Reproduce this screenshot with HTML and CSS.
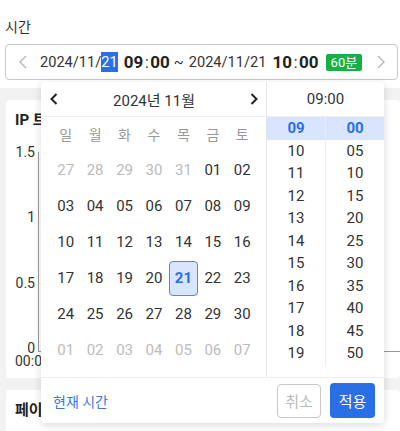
FILE: index.html
```html
<!DOCTYPE html>
<html lang="ko">
<head>
<meta charset="utf-8">
<link rel="stylesheet" href="styles.css">
</head>
<body>
<div class="top">
  <div class="label">시간</div>
  <div class="field">
    <svg class="f-chev" width="8" height="14" viewBox="0 0 8 14"><path d="M7 1 L1 7 L7 13" fill="none" stroke="#b5b5b5" stroke-width="1.3"/></svg>
    <div class="range">
      <span class="date">2024/11/<span class="sel">21</span></span>
      <span class="tm">09<span class="colon">:</span>00</span>
      <span class="tilde">~</span>
      <span class="date">2024/11/21</span>
      <span class="tm">10<span class="colon">:</span>00</span>
      <span class="badge">60분</span>
    </div>
    <svg class="f-chev r" width="8" height="14" viewBox="0 0 8 14"><path d="M1 1 L7 7 L1 13" fill="none" stroke="#b5b5b5" stroke-width="1.3"/></svg>
  </div>
</div>
<div class="bg">
  <div class="card c1">
    <div class="ctitle">IP 트래픽</div>
    <div class="chart">
      <div class="yaxis"><span>1.5</span><span>1</span><span>0.5</span><span>0</span></div>
      <div class="plot"></div>
    </div>
    <div class="xaxis">00:00</div>
  </div>
  <div class="card c2">
    <div class="ctitle">페이지</div>
  </div>
</div>

<div class="popup">
  <div class="main">
    <div class="cal">
      <div class="cal-head">
        <svg width="10" height="14" viewBox="0 0 10 14"><path d="M7.5 2 L2.5 7 L7.5 12" fill="none" stroke="#222" stroke-width="2"/></svg>
        <span class="ym">2024년 11월</span>
        <svg width="10" height="14" viewBox="0 0 10 14"><path d="M2.5 2 L7.5 7 L2.5 12" fill="none" stroke="#222" stroke-width="2"/></svg>
      </div>
      <div class="grid">
        <div class="wd">일</div><div class="wd">월</div><div class="wd">화</div><div class="wd">수</div><div class="wd">목</div><div class="wd">금</div><div class="wd">토</div>
        <div class="d off">27</div><div class="d off">28</div><div class="d off">29</div><div class="d off">30</div><div class="d off">31</div><div class="d">01</div><div class="d">02</div>
        <div class="d">03</div><div class="d">04</div><div class="d">05</div><div class="d">06</div><div class="d">07</div><div class="d">08</div><div class="d">09</div>
        <div class="d">10</div><div class="d">11</div><div class="d">12</div><div class="d">13</div><div class="d">14</div><div class="d">15</div><div class="d">16</div>
        <div class="d">17</div><div class="d">18</div><div class="d">19</div><div class="d">20</div><div class="d"><span class="cur">21</span></div><div class="d">22</div><div class="d">23</div>
        <div class="d">24</div><div class="d">25</div><div class="d">26</div><div class="d">27</div><div class="d">28</div><div class="d">29</div><div class="d">30</div>
        <div class="d off">01</div><div class="d off">02</div><div class="d off">03</div><div class="d off">04</div><div class="d off">05</div><div class="d off">06</div><div class="d off">07</div>
      </div>
    </div>
    <div class="time">
      <div class="t-head">09:00</div>
      <div class="cols">
        <div class="col hours">
          <div class="t on">09</div><div class="t">10</div><div class="t">11</div><div class="t">12</div><div class="t">13</div><div class="t">14</div><div class="t">15</div><div class="t">16</div><div class="t">17</div><div class="t">18</div><div class="t">19</div>
        </div>
        <div class="col mins">
          <div class="t on">00</div><div class="t">05</div><div class="t">10</div><div class="t">15</div><div class="t">20</div><div class="t">25</div><div class="t">30</div><div class="t">35</div><div class="t">40</div><div class="t">45</div><div class="t">50</div>
        </div>
      </div>
    </div>
  </div>
  <div class="footer">
    <span class="now">현재 시간</span>
    <div class="btns">
      <button class="btn cancel">취소</button>
      <button class="btn apply">적용</button>
    </div>
  </div>
</div>
</body>
</html>
```

FILE: styles.css
```css
* { box-sizing: border-box; }
html, body { margin: 0; padding: 0; }
body {
  width: 400px;
  height: 431px;
  overflow: hidden;
  position: relative;
  font-family: Roboto, "Noto Sans CJK KR", sans-serif;
  color: #333;
  background: #fff;
}
.top { padding: 17px 2px 8px 5px; }
.label { font-size: 14px; line-height: 20px; color: #333; }
.field {
  margin-top: 7px;
  height: 36px;
  border: 1px solid #c8c8c8;
  border-radius: 4px;
  display: flex;
  align-items: center;
  padding: 0 12px 0 12px;
}
.f-chev { flex: none; margin-left: 1px; }
.f-chev.r { margin-left: auto; }
.range {
  display: flex;
  align-items: center;
  gap: 6px;
  margin-left: 13px;
  font-size: 14.6px;
  color: #333;
  white-space: nowrap;
}
.sel { background: #2a6fe6; color: #fff; padding: 1px 0; }
.tm { font-size: 17px; font-weight: 700; color: #222; letter-spacing: 0; }
.colon { font-weight: 400; margin: 0 1.5px; color: #444; }
.tilde { margin: 0 -1px 0 -2px; }
.badge {
  background: #17b045;
  color: #fff;
  font-size: 13px;
  line-height: 17px;
  padding: 0 5px;
  border-radius: 2px;
  margin-left: 1px;
}
.bg {
  background: #f2f2f2;
  height: 343px;
  padding: 12px 0 0 6px;
}
.card { background: #fff; border-radius: 4px; }
.c1 { height: 278px; padding: 10px 0 0 9px; margin-bottom: 12px; }
.c2 { height: 60px; padding: 10px 0 0 9px; }
.ctitle { font-size: 15px; font-weight: 700; line-height: 20px; color: #222; white-space: nowrap; }
.chart { display: flex; margin-top: 14px; height: 212px; }
.yaxis {
  width: 20px;
  display: flex;
  flex-direction: column;
  justify-content: space-between;
  align-items: flex-end;
  font-size: 14px;
  line-height: 16px;
  color: #333;
}
.plot {
  flex: 1;
  margin: 8px 0 0 3px;
  height: 200px;
  border-left: 1.5px solid #9a9a9a;
  border-bottom: 1.5px solid #9a9a9a;
}
.xaxis { font-size: 14px; line-height: 12px; margin-top: -1px; color: #333; }

.popup {
  position: absolute;
  left: 41px;
  top: 82px;
  width: 343px;
  height: 341px;
  background: #fff;
  border-radius: 4px;
  box-shadow: 0 2px 8px rgba(0,0,0,0.15);
  display: flex;
  flex-direction: column;
}
.main { display: flex; height: 295px; }
.cal { width: 226px; border-right: 1px solid #e8e8e8; }
.cal-head {
  height: 35px;
  border-bottom: 1px solid #eee;
  display: flex;
  align-items: center;
  justify-content: space-between;
  padding: 0 7px 0 8px;
}
.ym { font-size: 15px; color: #333; }
.grid {
  display: grid;
  grid-template-columns: repeat(7, 1fr);
  grid-auto-rows: 36px;
  padding: 0 9px 0 10px;
}
.wd { height: 34px; display: flex; align-items: center; justify-content: center; font-size: 14px; color: #999; }
.grid > .wd { align-self: start; }
.d { display: flex; align-items: center; justify-content: center; font-size: 15px; color: #333; margin-top: -2px; }
.d.off { color: #bbb; }
.cur {
  width: 29px;
  height: 35px;
  display: flex;
  align-items: center;
  justify-content: center;
  background: #d8e5fd;
  border: 1px solid #4d88ef;
  border-radius: 4px;
  color: #2a6fe6;
  font-weight: 700;
}
.time { flex: 1; display: flex; flex-direction: column; }
.t-head {
  height: 35px;
  border-bottom: 1px solid #eee;
  display: flex;
  align-items: center;
  justify-content: center;
  font-size: 15px;
  color: #333;
}
.cols { display: flex; height: 249px; }
.hours { width: 59px; border-right: 1px solid #eee; }
.mins { flex: 1; }
.t {
  height: 22.5px;
  display: flex;
  align-items: center;
  justify-content: center;
  font-size: 15px;
  color: #333;
}
.t.on { background: #d8e5fd; color: #2a6fe6; font-weight: 700; }
.footer {
  flex: 1;
  border-top: 1px solid #eee;
  display: flex;
  align-items: center;
  justify-content: space-between;
  padding: 0 9px 0 12px;
}
.now { font-size: 14px; color: #3a78e0; }
.btns { display: flex; gap: 9px; align-items: center; }
.btn {
  font-family: Roboto, "Noto Sans CJK KR", sans-serif;
  font-size: 15px;
  height: 35px;
  width: 45px;
  border-radius: 4px;
  padding: 0;
}
.cancel { background: #fff; border: 1px solid #c8c8c8; color: #bbb; width: 44px; height: 34px; }
.apply { background: #2a6fe6; border: none; color: #fff; }
```
